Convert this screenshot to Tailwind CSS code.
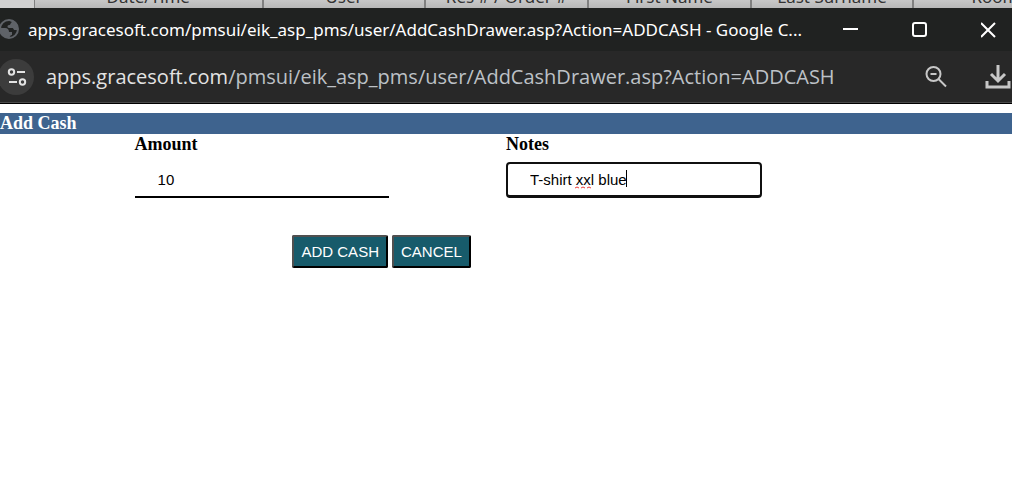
<!DOCTYPE html>
<html lang="en">
  <head>
    <meta charset="UTF-8" />
    <meta name="viewport" content="width=device-width, initial-scale=1.0" />
    <script src="https://cdn.jsdelivr.net/npm/@tailwindcss/browser@4"></script>
    <title>Add Cash</title>
  </head>
  <body class="bg-white text-black overflow-hidden">
    <!-- grid header of the window behind -->
    <div class="h-2 overflow-hidden flex flex-col justify-end bg-[#c8c8c8] font-['Noto_Sans',sans-serif]">
      <table class="w-[1076px] shrink-0 table-fixed border-collapse text-[17px] leading-[22px] text-[#333333]">
        <tr class="bg-linear-to-b from-[#e4e4e4] to-[#b8b8b8]">
          <th class="w-[34px] border-r border-[#808080] bg-[#d0d0d0]"></th>
          <th class="w-[229px] border-r-2 border-[#808080] font-normal">Date/Time</th>
          <th class="w-[162px] border-r-2 border-[#808080] font-normal">User</th>
          <th class="w-[163px] border-r-2 border-[#808080] font-normal">Res # / Order #</th>
          <th class="w-[163px] border-r-2 border-[#808080] font-normal">First Name</th>
          <th class="w-[162px] border-r-2 border-[#808080] font-normal">Last Surname</th>
          <th class="font-normal">Room</th>
        </tr>
      </table>
    </div>

    <!-- title bar -->
    <header class="flex items-center h-[43px] bg-[#202221] text-white font-['Noto_Sans',sans-serif]">
      <svg class="w-5 h-[22px] shrink-0" viewBox="0 0 20 22">
        <circle cx="9" cy="10" r="9" fill="#202221" stroke="#5f6368" stroke-width="2" />
        <path d="M8 1C14 0 19 5 18 11H15C13 11 14 9 12 9H9C7 9 7 6 9 6C11 6 10 4 12 3ZM0 9H5C8 9 9 11 9 13H12V16C10 16 10 18 9 19C4 19 0 15 0 9Z" fill="#5f6368" />
      </svg>
      <h1 class="ml-2 grow whitespace-nowrap text-[17px] leading-6">apps.gracesoft.com/pmsui/eik_asp_pms/user/AddCashDrawer.asp?Action=ADDCASH - Google C...</h1>
      <div class="flex shrink-0 gap-[53px] pr-[15px]">
        <button type="button" aria-label="Minimize">
          <svg class="w-4 h-4" viewBox="0 0 16 16"><path d="M0 7H15" stroke="#fff" stroke-width="2" /></svg>
        </button>
        <button type="button" aria-label="Maximize">
          <svg class="w-4 h-4" viewBox="0 0 16 16"><rect x="1" y="1" width="13" height="13" rx="2" fill="none" stroke="#fff" stroke-width="2" /></svg>
        </button>
        <button type="button" aria-label="Close">
          <svg class="w-4 h-4" viewBox="0 0 16 16"><path d="M0 1L14 15M14 1L0 15" stroke="#fff" stroke-width="2" /></svg>
        </button>
      </div>
    </header>

    <!-- address bar -->
    <div class="flex items-center h-[53px] bg-[#282828] border-b border-black shadow-[inset_0_-1px_0_#4a4a4a] text-[#bdc1c6] font-['Open_Sans',sans-serif]">
      <button class="w-9 h-9 -ml-0.5 shrink-0 rounded-full bg-[#3c3c3c]" type="button" aria-label="Site information">
        <svg class="w-9 h-9" viewBox="0 0 36 36" fill="none" stroke="#e3e3e3" stroke-width="2">
          <circle cx="13.5" cy="13" r="2.7" />
          <path d="M19 13H27M11 23H19" />
          <circle cx="24.5" cy="23" r="2.7" />
        </svg>
      </button>
      <p class="ml-3 grow whitespace-nowrap text-[20px] leading-7"><span class="text-[#e3e3e3]">apps.gracesoft.com</span>/pmsui/eik_asp_pms/user/AddCashDrawer.asp?Action=ADDCASH</p>
      <div class="flex shrink-0 items-center gap-9">
        <button type="button" aria-label="Zoom">
          <svg class="w-6 h-6" viewBox="0 0 24 24" fill="none" stroke="#c7c7c7" stroke-width="2">
            <circle cx="9.5" cy="9" r="7" />
            <path d="M6.5 9H12.5M14.5 14L22 21.5" />
          </svg>
        </button>
        <button type="button" aria-label="Downloads">
          <svg class="w-7 h-7" viewBox="0 0 28 28" fill="none" stroke="#c7c7c7" stroke-width="3">
            <path d="M14 2V18M7 11L14 18L21 11M3 18V24H25V18" />
          </svg>
        </button>
      </div>
    </div>

    <main class="pt-[9px] font-['Liberation_Serif',serif]">
      <h2 class="h-[21px] bg-[#3e638e] text-white text-[18px] leading-5 font-bold">Add Cash</h2>
      <form>
        <div class="ml-[13.3%] w-[73.4%] grid grid-cols-2 text-[18px] leading-5 font-bold">
          <div>
            <label class="block" for="amount">Amount</label>
            <input id="amount" class="mt-2 block w-[254px] h-9 px-[23px] border-b-2 border-black outline-none font-normal text-[15px] font-['Liberation_Sans',sans-serif]" type="text" value="10" />
          </div>
          <div>
            <label class="block" for="notes">Notes</label>
            <div class="relative mt-2 w-64">
              <input id="notes" class="block w-full h-9 px-[22px] border-2 border-b-3 border-[#101010] rounded-sm outline-none font-normal text-[15px] font-['Liberation_Sans',sans-serif]" type="text" value="T-shirt xxl blue" spellcheck="false" />
              <!-- spelling mark and caret -->
              <svg class="absolute left-[69px] top-6 w-4 h-[3px]" viewBox="0 0 16 3" fill="none" stroke="#ee3b3b">
                <path d="M0 2L2 1L4 2M6 2L8 1L10 2M12 2L14 1L16 2" />
              </svg>
              <span class="absolute left-[120px] top-2 w-px h-[17px] bg-black"></span>
            </div>
          </div>
        </div>
        <div class="mt-[37px] pl-[28.9%] flex gap-1 text-white text-[15px] leading-[17px] font-['Liberation_Sans',sans-serif]">
          <button class="px-[7px] py-1.5 bg-[#175b6b] border-2 border-t-[#505050] border-l-[#505050] border-r-black border-b-black rounded-xs" type="button">ADD CASH</button>
          <button class="px-[7px] py-1.5 bg-[#175b6b] border-2 border-t-[#505050] border-l-[#505050] border-r-black border-b-black rounded-xs" type="button">CANCEL</button>
        </div>
      </form>
    </main>
  </body>
</html>
